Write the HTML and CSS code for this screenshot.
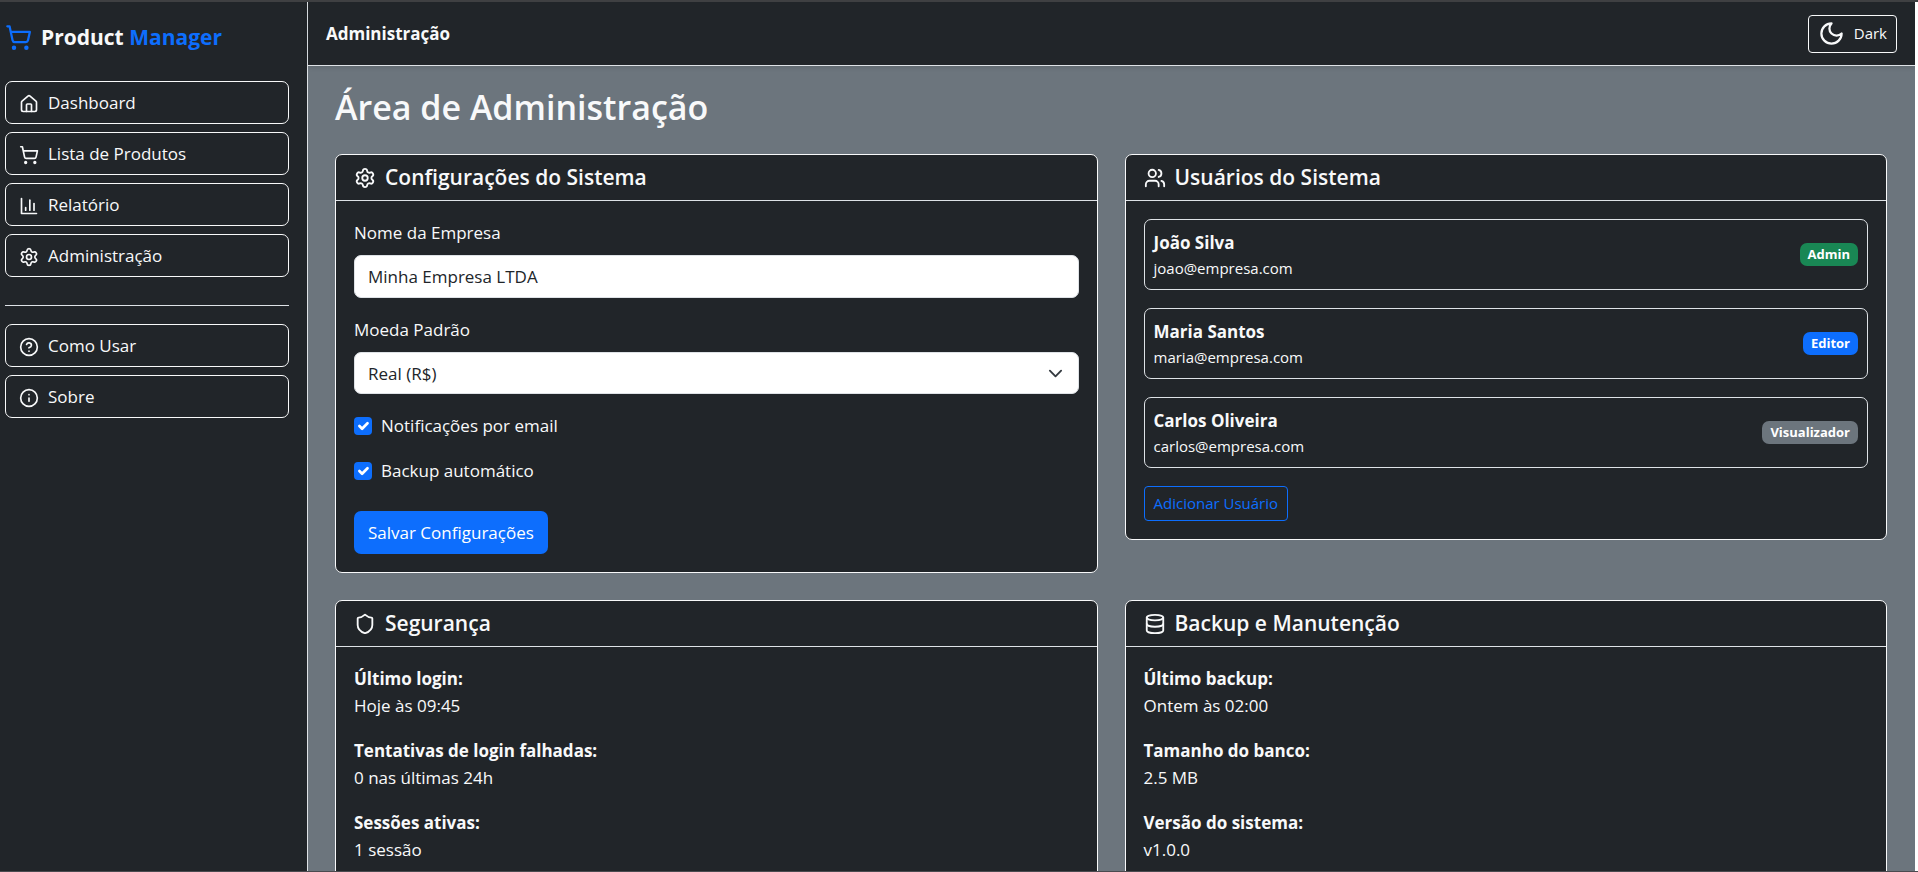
FILE: index.html
```html
<!DOCTYPE html>
<html lang="pt-BR">
<head>
<meta charset="utf-8">
<meta name="viewport" content="width=device-width, initial-scale=1">
<title>Product Manager - Administração</title>
<link rel="stylesheet" href="styles.css">
</head>
<body>
<svg class="sprite" aria-hidden="true">
  <symbol id="cart" viewBox="0 0 24 24"><circle cx="8" cy="21" r="1"/><circle cx="19" cy="21" r="1"/><path d="M2.05 2.05h2l2.66 12.42a2 2 0 0 0 2 1.58h9.78a2 2 0 0 0 1.95-1.57l1.65-7.43H5.12"/></symbol>
  <symbol id="house" viewBox="0 0 24 24"><path d="M15 21v-8a1 1 0 0 0-1-1h-4a1 1 0 0 0-1 1v8"/><path d="M3 10a2 2 0 0 1 .709-1.528l7-6a2 2 0 0 1 2.582 0l7 6A2 2 0 0 1 21 10v9a2 2 0 0 1-2 2H5a2 2 0 0 1-2-2z"/></symbol>
  <symbol id="chart" viewBox="0 0 24 24"><path d="M3 3v18h18"/><path d="M18 17V9"/><path d="M13 17V5"/><path d="M8 17v-3"/></symbol>
  <symbol id="gear" viewBox="0 0 24 24"><path d="M9.671 4.136a2.34 2.34 0 0 1 4.659 0 2.34 2.34 0 0 0 3.319 1.915 2.34 2.34 0 0 1 2.33 4.033 2.34 2.34 0 0 0 0 3.831 2.34 2.34 0 0 1-2.33 4.033 2.34 2.34 0 0 0-3.319 1.915 2.34 2.34 0 0 1-4.659 0 2.34 2.34 0 0 0-3.32-1.915 2.34 2.34 0 0 1-2.33-4.033 2.34 2.34 0 0 0 0-3.831A2.34 2.34 0 0 1 6.35 6.051a2.34 2.34 0 0 0 3.319-1.915"/><circle cx="12" cy="12" r="3"/></symbol>
  <symbol id="help" viewBox="0 0 24 24"><circle cx="12" cy="12" r="10"/><path d="M9.09 9a3 3 0 0 1 5.83 1c0 2-3 3-3 3"/><path d="M12 17h.01"/></symbol>
  <symbol id="info" viewBox="0 0 24 24"><circle cx="12" cy="12" r="10"/><path d="M12 16v-4"/><path d="M12 8h.01"/></symbol>
  <symbol id="moon" viewBox="0 0 24 24"><path d="M12 3a6 6 0 0 0 9 9 9 9 0 1 1-9-9Z"/></symbol>
  <symbol id="users" viewBox="0 0 24 24"><path d="M16 21v-2a4 4 0 0 0-4-4H6a4 4 0 0 0-4 4v2"/><circle cx="9" cy="7" r="4"/><path d="M22 21v-2a4 4 0 0 0-3-3.87"/><path d="M16 3.13a4 4 0 0 1 0 7.75"/></symbol>
  <symbol id="shield" viewBox="0 0 24 24"><path d="M20 13c0 5-3.500 7.500-7.660 8.950a1 1 0 0 1-.67-.01C7.500 20.500 4 18 4 13V6a1 1 0 0 1 1-1c2 0 4.500-1.200 6.240-2.720a1.170 1.170 0 0 1 1.520 0C14.510 3.810 17 5 19 5a1 1 0 0 1 1 1z"/></symbol>
  <symbol id="database" viewBox="0 0 24 24"><ellipse cx="12" cy="5" rx="9" ry="3"/><path d="M3 5v14a9 3 0 0 0 18 0V5"/><path d="M3 12a9 3 0 0 0 18 0"/></symbol>
  <symbol id="chevron" viewBox="0 0 16 16"><path d="m2 5 6 6 6-6"/></symbol>
</svg>
<div class="app">
  <aside class="sidebar">
    <a class="brand" href="#"><svg class="icon icon-brand"><use href="#cart"/></svg><span>Product <span class="accent">Manager</span></span></a>
    <nav class="nav">
      <a class="nav-link" href="#"><svg class="icon"><use href="#house"/></svg>Dashboard</a>
      <a class="nav-link" href="#"><svg class="icon"><use href="#cart"/></svg>Lista de Produtos</a>
      <a class="nav-link" href="#"><svg class="icon"><use href="#chart"/></svg>Relatório</a>
      <a class="nav-link" href="#"><svg class="icon"><use href="#gear"/></svg>Administração</a>
    </nav>
    <hr class="divider">
    <nav class="nav">
      <a class="nav-link" href="#"><svg class="icon"><use href="#help"/></svg>Como Usar</a>
      <a class="nav-link" href="#"><svg class="icon"><use href="#info"/></svg>Sobre</a>
    </nav>
  </aside>
  <div class="page">
    <header class="topbar">
      <strong>Administração</strong>
      <button class="theme" type="button"><svg class="icon icon-brand"><use href="#moon"/></svg>Dark</button>
    </header>
    <main class="content">
      <h1 class="title">Área de Administração</h1>
      <div class="grid">
        <section class="card">
          <h2 class="card-header"><svg class="icon"><use href="#gear"/></svg>Configurações do Sistema</h2>
          <form class="card-body">
            <label class="label" for="company">Nome da Empresa</label>
            <input class="control" id="company" type="text" value="Minha Empresa LTDA">
            <label class="label" for="currency">Moeda Padrão</label>
            <div class="select-wrap">
              <select class="control" id="currency"><option>Real (R$)</option></select>
              <svg class="chevron"><use href="#chevron"/></svg>
            </div>
            <label class="check"><input class="tick" type="checkbox" checked>Notificações por email</label>
            <label class="check"><input class="tick" type="checkbox" checked>Backup automático</label>
            <button class="btn" type="button">Salvar Configurações</button>
          </form>
        </section>
        <section class="card">
          <h2 class="card-header"><svg class="icon"><use href="#users"/></svg>Usuários do Sistema</h2>
          <div class="card-body">
            <ul class="users">
              <li class="user"><div><strong>João Silva</strong><small>joao@empresa.com</small></div><span class="badge green">Admin</span></li>
              <li class="user"><div><strong>Maria Santos</strong><small>maria@empresa.com</small></div><span class="badge blue">Editor</span></li>
              <li class="user"><div><strong>Carlos Oliveira</strong><small>carlos@empresa.com</small></div><span class="badge gray">Visualizador</span></li>
            </ul>
            <button class="btn-outline" type="button">Adicionar Usuário</button>
          </div>
        </section>
        <section class="card">
          <h2 class="card-header"><svg class="icon"><use href="#shield"/></svg>Segurança</h2>
          <div class="card-body">
            <p><strong>Último login:</strong><br>Hoje às 09:45</p>
            <p><strong>Tentativas de login falhadas:</strong><br>0 nas últimas 24h</p>
            <p><strong>Sessões ativas:</strong><br>1 sessão</p>
          </div>
        </section>
        <section class="card">
          <h2 class="card-header"><svg class="icon"><use href="#database"/></svg>Backup e Manutenção</h2>
          <div class="card-body">
            <p><strong>Último backup:</strong><br>Ontem às 02:00</p>
            <p><strong>Tamanho do banco:</strong><br>2.5 MB</p>
            <p><strong>Versão do sistema:</strong><br>v1.0.0</p>
          </div>
        </section>
      </div>
    </main>
  </div>
</div>
</body>
</html>
```
FILE: styles.css
```css
* { box-sizing: border-box; }
body {
  margin: 0;
  height: 100vh;
  overflow: hidden;
  border-top: 2px solid #3f4042;
  border-bottom: 1px solid #4a4b50;
  background: #fff;
  color: #f8f9fa;
  font: 17px/27px "Open Sans", "Noto Sans", sans-serif;
}
button, input, select { font: inherit; }
.sprite { position: absolute; width: 0; height: 0; }
.icon, .chevron {
  flex: none;
  width: 22px;
  height: 22px;
  fill: none;
  stroke: currentColor;
  stroke-width: 2;
  stroke-linecap: round;
  stroke-linejoin: round;
}
.icon-brand { width: 27px; height: 27px; }

.app { display: flex; height: 100%; margin-right: 3px; overflow: hidden; }

.sidebar {
  flex: 0 0 308px;
  padding: 21px 18px 0 5px;
  border-right: 1px solid #dee2e6;
  background: #212529;
}
.brand {
  display: flex;
  align-items: center;
  gap: 9px;
  margin-bottom: 30px;
  color: #f8f9fa;
  font-size: 21px;
  font-weight: 700;
  line-height: 28px;
  text-decoration: none;
}
.accent { color: #0d6efd; }
.brand .icon { color: #0d6efd; }
.nav { display: grid; gap: 8px; }
.nav-link {
  display: flex;
  align-items: center;
  gap: 9px;
  height: 43px;
  padding: 0 13px;
  border: 1px solid #f8f9fa;
  border-radius: 7px;
  color: #f8f9fa;
  text-decoration: none;
}
.nav-link .icon { width: 20px; height: 20px; margin-top: 3px; }
.divider { margin: 28px 0 18px; border: 0; border-top: 1px solid #dee2e6; }

.page { display: flex; flex: 1; flex-direction: column; min-width: 0; background: #6c757d; }
.topbar {
  display: flex;
  flex: none;
  align-items: center;
  justify-content: space-between;
  height: 64px;
  padding: 0 18px;
  border-bottom: 1px solid #dee2e6;
  background: #212529;
  box-shadow: 0 2px 4px rgba(0, 0, 0, .1);
}
.theme {
  display: flex;
  align-items: center;
  gap: 9px;
  height: 38px;
  padding: 0 9px;
  border: 1px solid #f8f9fa;
  border-radius: 4px;
  background: transparent;
  color: #f8f9fa;
  font-size: 15px;
}

.content { padding: 20px 28px 20px 27px; }
.title { margin: 0 0 25px; font-size: 34px; font-weight: 600; line-height: 43px; }
.grid {
  display: grid;
  grid-template-columns: 1fr 1fr;
  align-items: start;
  gap: 27px;
}
.card { border: 1px solid #f8f9fa; border-radius: 7px; background: #212529; }
.card-header {
  display: flex;
  align-items: center;
  gap: 9px;
  height: 46px;
  margin: 0;
  padding: 0 18px;
  border-bottom: 1px solid #dee2e6;
  font-size: 21px;
  font-weight: 600;
}
.card-body { padding: 18px; }
.card-body p { margin: 0 0 18px; }

.label { display: block; margin-bottom: 9px; }
.control {
  display: block;
  width: 100%;
  height: 43px;
  margin-bottom: 18px;
  padding: 0 13px;
  border: 1px solid #dee2e6;
  border-radius: 7px;
  background: #fff;
  color: #212529;
  appearance: none;
}
.select-wrap { position: relative; }
.select-wrap .control { height: 42px; }
.chevron {
  position: absolute;
  top: 14px;
  right: 16px;
  width: 15px;
  height: 15px;
  color: #343a40;
}
.check { display: flex; align-items: center; gap: 9px; margin-bottom: 18px; }
.tick {
  width: 18px;
  height: 18px;
  margin: 0;
  border-radius: 4px;
  background: #0d6efd url("data:image/svg+xml,%3Csvg xmlns='http://www.w3.org/2000/svg' viewBox='0 0 20 20'%3E%3Cpath fill='none' stroke='%23fff' stroke-linecap='round' stroke-linejoin='round' stroke-width='3' d='m6 10 3 3 6-6'/%3E%3C/svg%3E");
  appearance: none;
}
.btn {
  display: block;
  height: 43px;
  margin-top: 27px;
  padding: 0 14px;
  border: 0;
  border-radius: 7px;
  background: #0d6efd;
  color: #fff;
}

.users { display: grid; gap: 18px; margin: 0 0 18px; padding: 0; list-style: none; }
.user {
  display: flex;
  align-items: center;
  justify-content: space-between;
  padding: 9px;
  border: 1px solid #dee2e6;
  border-radius: 7px;
}
.user strong, .user small { display: block; }
.user small { font-size: 15px; line-height: 24px; }
.badge {
  padding: 0 8px;
  border-radius: 7px;
  color: #fff;
  font-size: 13px;
  font-weight: 700;
  line-height: 23px;
}
.green { background: #198754; }
.blue { background: #0d6efd; }
.gray { background: #6c757d; }
.btn-outline {
  display: block;
  height: 35px;
  padding: 0 9px;
  border: 1px solid #0d6efd;
  border-radius: 4px;
  background: transparent;
  color: #0d6efd;
  font-size: 15px;
}
```
